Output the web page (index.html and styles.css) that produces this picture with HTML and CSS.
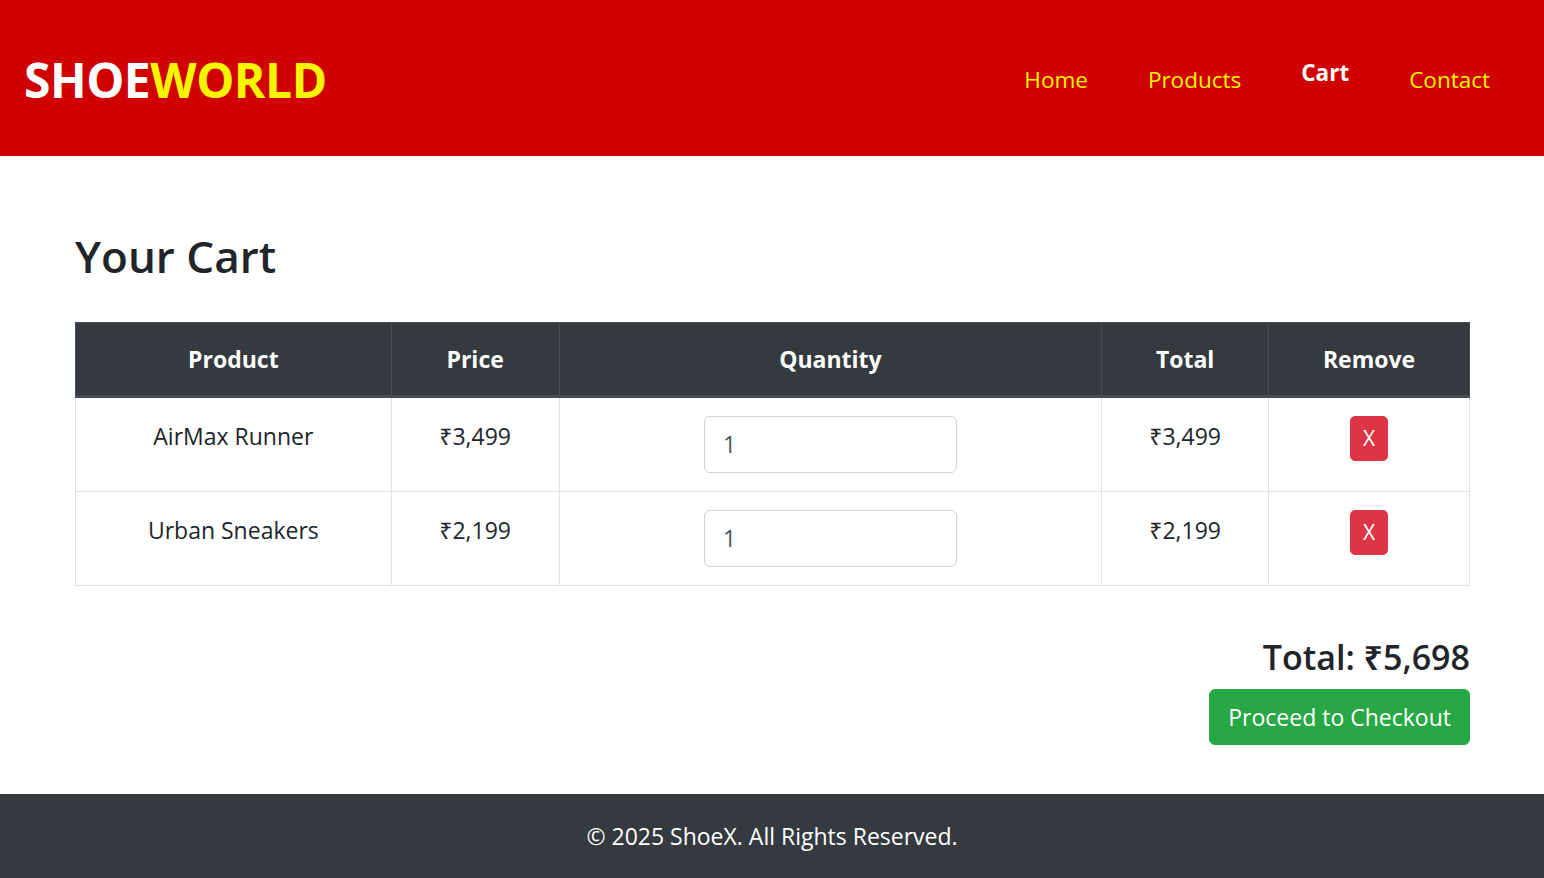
FILE: index.html
```html
<!DOCTYPE html>
<html lang="en">
<head>
<meta charset="utf-8">
<title>ShoeWorld - Cart</title>
<link rel="stylesheet" href="styles.css">
</head>
<body>
<header class="site-header">
  <div class="logo"><span class="logo-a">SHOE</span><span class="logo-b">WORLD</span></div>
  <nav class="nav">
    <a class="nav-link" href="#">Home</a>
    <a class="nav-link" href="#">Products</a>
    <a class="nav-link active" href="#">Cart</a>
    <a class="nav-link" href="#">Contact</a>
  </nav>
</header>

<main class="container">
  <h2 class="page-title">Your Cart</h2>
  <table class="cart-table">
    <thead>
      <tr>
        <th class="c-product">Product</th>
        <th class="c-price">Price</th>
        <th class="c-qty">Quantity</th>
        <th class="c-total">Total</th>
        <th class="c-remove">Remove</th>
      </tr>
    </thead>
    <tbody>
      <tr>
        <td class="cell-text">AirMax Runner</td>
        <td class="cell-text">₹3,499</td>
        <td><input class="qty-input" type="number" value="1"></td>
        <td class="cell-text">₹3,499</td>
        <td><button class="btn-remove">X</button></td>
      </tr>
      <tr>
        <td class="cell-text">Urban Sneakers</td>
        <td class="cell-text">₹2,199</td>
        <td><input class="qty-input" type="number" value="1"></td>
        <td class="cell-text">₹2,199</td>
        <td><button class="btn-remove">X</button></td>
      </tr>
    </tbody>
  </table>
  <div class="summary">
    <h4 class="total">Total: ₹5,698</h4>
    <button class="btn-checkout">Proceed to Checkout</button>
  </div>
</main>

<footer class="site-footer">
  <p class="footer-text">© 2025 ShoeX. All Rights Reserved.</p>
</footer>
</body>
</html>
```

FILE: styles.css
```css
* { box-sizing: border-box; }

html, body {
  margin: 0;
  padding: 0;
}

body {
  font-family: "Open Sans", "Noto Sans", "DejaVu Sans", sans-serif;
  font-size: 23px;
  line-height: 1.5;
  color: #212529;
  background: #fff;
}

.site-header {
  height: 156px;
  background: #d00000;
  display: flex;
  align-items: center;
  justify-content: space-between;
  padding: 4px 54px 0 24px;
}

.logo {
  font-size: 48px;
  font-weight: 700;
  line-height: 1.2;
  letter-spacing: -0.5px;
}

.logo-a { color: #ffffff; }
.logo-b { color: #f5f500; }

.nav {
  display: flex;
  align-items: center;
  gap: 60px;
}

.nav-link {
  color: #f5f500;
  text-decoration: none;
  font-size: 22.5px;
  line-height: 36px;
}

.nav-link.active {
  color: #ffffff;
  font-weight: 700;
  padding-bottom: 15px;
}

.container {
  padding: 72px 74px 0 75px;
}

.page-title {
  margin: 0 0 36px;
  font-size: 44px;
  font-weight: 600;
  line-height: 57.6px;
}

.cart-table {
  width: 100%;
  border-collapse: collapse;
  margin-bottom: 24px;
}

.cart-table th,
.cart-table td {
  padding: 18px;
  text-align: center;
  vertical-align: top;
  border: 1px solid #dee2e6;
  line-height: 36px;
}

.cart-table td.cell-text {
  padding-top: 20px;
}

.cart-table th {
  background: #343a40;
  color: #fff;
  font-weight: 700;
  border-color: #454d55;
  border-bottom: 3px solid #454d55;
}

.c-product { width: 316px; }
.c-price { width: 168px; }
.c-qty { width: 543px; }
.c-total { width: 167px; }
.c-remove { width: 201px; }

.qty-input {
  width: 253px;
  height: 57px;
  padding: 9px 18px;
  font: inherit;
  font-size: 23px;
  color: #495057;
  border: 1.5px solid #ced4da;
  border-radius: 6px;
  background: #fff;
}

.btn-remove {
  font-family: inherit;
  font-size: 21px;
  line-height: 31px;
  padding: 6px 12px;
  color: #fff;
  background: #dc3545;
  border: 1px solid #dc3545;
  border-radius: 5px;
}

.summary {
  display: flex;
  flex-direction: column;
  align-items: flex-end;
}

.total {
  margin: 27px 0 12px;
  font-size: 34px;
  font-weight: 600;
  line-height: 1.2;
}

.btn-checkout {
  font-family: inherit;
  font-size: 23px;
  line-height: 36px;
  padding: 9px 18px;
  color: #fff;
  background: #28a745;
  border: 1.5px solid #28a745;
  border-radius: 6px;
}

.site-footer {
  margin-top: 49px;
  background: #343a40;
  color: #fff;
  text-align: center;
  padding: 24px 0;
}

.footer-text {
  margin: 0;
  line-height: 36px;
}
```
